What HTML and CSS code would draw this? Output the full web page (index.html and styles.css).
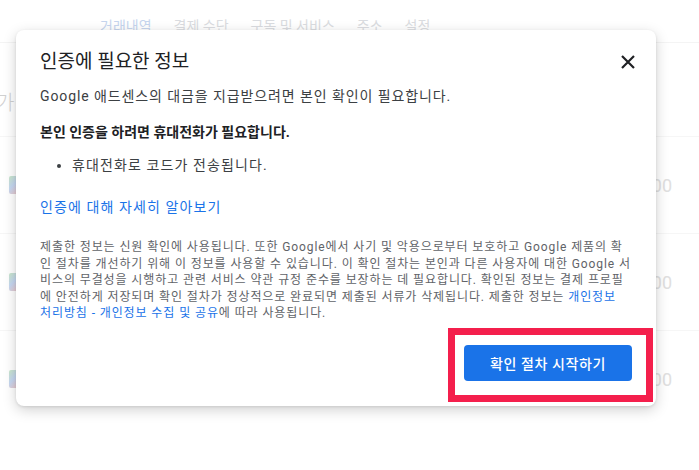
FILE: index.html
```html
<!DOCTYPE html>
<html lang="ko">
<head>
    <meta charset="UTF-8">
    <title>인증에 필요한 정보</title>
    <link rel="stylesheet" href="styles.css">
</head>
<body>

    <!-- Page behind the dialog -->
    <div class="page">
        <nav class="tabs">
            <span class="tab active">거래내역</span>
            <span class="tab">결제 수단</span>
            <span class="tab">구독 및 서비스</span>
            <span class="tab">주소</span>
            <span class="tab">설정</span>
        </nav>
        <h2 class="page-title">가</h2>
        <div class="rows">
            <div class="row"><span class="chip"></span><span class="amount">00</span></div>
            <div class="row"><span class="chip"></span><span class="amount">00</span></div>
            <div class="row"><span class="chip"></span><span class="amount">00</span></div>
        </div>
    </div>

    <!-- Dialog -->
    <div class="dialog">
        <div class="dialog-head">
            <h1>인증에 필요한 정보</h1>
            <button class="close" aria-label="닫기">
                <svg width="14" height="14" viewBox="0 0 14 14">
                    <path d="M1 1L13 13M13 1L1 13" stroke="#202124" stroke-width="2.2" fill="none"/>
                </svg>
            </button>
        </div>
        <p class="lead">Google 애드센스의 대금을 지급받으려면 본인 확인이 필요합니다.</p>
        <p class="strong">본인 인증을 하려면 휴대전화가 필요합니다.</p>
        <ul class="points">
            <li>휴대전화로 코드가 전송됩니다.</li>
        </ul>
        <a class="more" href="#">인증에 대해 자세히 알아보기</a>
        <p class="fine">제출한 정보는 신원 확인에 사용됩니다. 또한 Google에서 사기 및 악용으로부터 보호하고 Google 제품의 확인 절차를 개선하기 위해 이 정보를 사용할 수 있습니다. 이 확인 절차는 본인과 다른 사용자에 대한 Google 서비스의 무결성을 시행하고 관련 서비스 약관 규정 준수를 보장하는 데 필요합니다. 확인된 정보는 결제 프로필에 안전하게 저장되며 확인 절차가 정상적으로 완료되면 제출된 서류가 삭제됩니다. 제출한 정보는 <a href="#">개인정보<span class="nowrap">처리방침</span> - 개인정보 수집 및 공유</a>에 따라 사용됩니다.</p>
        <div class="actions">
            <button class="start">확인 절차 시작하기</button>
        </div>
        <!-- red highlight -->
        <div class="mark"></div>
    </div>

</body>
</html>
```

FILE: styles.css
```css
* {
    margin: 0;
    padding: 0;
    box-sizing: border-box;
}

body {
    font-family: Roboto, "Noto Sans CJK KR", sans-serif;
    width: 699px;
    height: 470px;
    background: #fff;
    overflow: hidden;
    position: relative;
}

/* Background page (faded) */
.page {
    color: #dadce0;
}

.tabs {
    display: flex;
    gap: 22px;
    padding: 15px 0 0 100px;
    height: 43px;
    border-bottom: 1px solid #f4f4f4;
    font-size: 14px;
}

.tab.active {
    color: #c6d5ee;
}

.page-title {
    font-size: 20px;
    font-weight: 300;
    margin: 44px 0 0 -4px;
    color: #d0d0d0;
}

.rows {
    margin-top: 20px;
}

.row {
    display: flex;
    justify-content: space-between;
    align-items: center;
    height: 97px;
    padding: 0 27px 0 9px;
    border-top: 1px solid #f6f6f6;
}

.chip {
    width: 12px;
    height: 18px;
    border-radius: 2px;
    background: linear-gradient(135deg, #c8e6c9 0%, #c5d7f2 45%, #f6c5c0 100%);
}

.amount {
    font-size: 18px;
    color: #e0e0e0;
}

/* Dialog */
.dialog {
    position: absolute;
    left: 16px;
    top: 30px;
    width: 640px;
    height: 376px;
    background: #fff;
    border-radius: 8px;
    box-shadow: 0 4px 14px rgba(0, 0, 0, 0.18), 0 1px 3px rgba(0, 0, 0, 0.1);
    padding: 18px 24px 0 24px;
    color: #3c4043;
}

.dialog-head {
    display: flex;
    justify-content: space-between;
    align-items: center;
}

h1 {
    font-size: 19px;
    font-weight: 400;
    color: #202124;
    line-height: 28px;
}

.close {
    background: none;
    border: none;
    width: 24px;
    height: 24px;
    display: flex;
    align-items: center;
    justify-content: center;
    margin-right: -8px;
}

.lead {
    margin-top: 10px;
    font-size: 14px;
    line-height: 20px;
    letter-spacing: 0.9px;
}

.strong {
    margin-top: 16px;
    font-size: 14px;
    font-weight: 700;
    line-height: 20px;
    color: #202124;
}

.points {
    margin: 13px 0 0 32px;
    font-size: 14px;
    line-height: 20px;
    letter-spacing: 1.1px;
}

.more {
    display: block;
    margin-top: 22px;
    font-size: 14px;
    line-height: 20px;
    letter-spacing: 1.1px;
    color: #1a73e8;
    text-decoration: none;
}

.fine {
    margin-top: 22px;
    font-size: 12px;
    line-height: 16.6px;
    letter-spacing: 0.9px;
    color: #5f6368;
}

.fine a {
    color: #1a73e8;
    text-decoration: none;
}

.nowrap {
    white-space: nowrap;
}

.actions {
    display: flex;
    justify-content: flex-end;
    margin-top: 23px;
}

.start {
    width: 168px;
    height: 36px;
    border: none;
    border-radius: 4px;
    background: #1a73e8;
    color: #fff;
    font-family: Roboto, "Noto Sans CJK KR", sans-serif;
    font-size: 14px;
    font-weight: 500;
    letter-spacing: 0.6px;
}

.mark {
    position: absolute;
    left: 432px;
    top: 298px;
    width: 205px;
    height: 74px;
    border: 7px solid #f41f4c;
}
```
